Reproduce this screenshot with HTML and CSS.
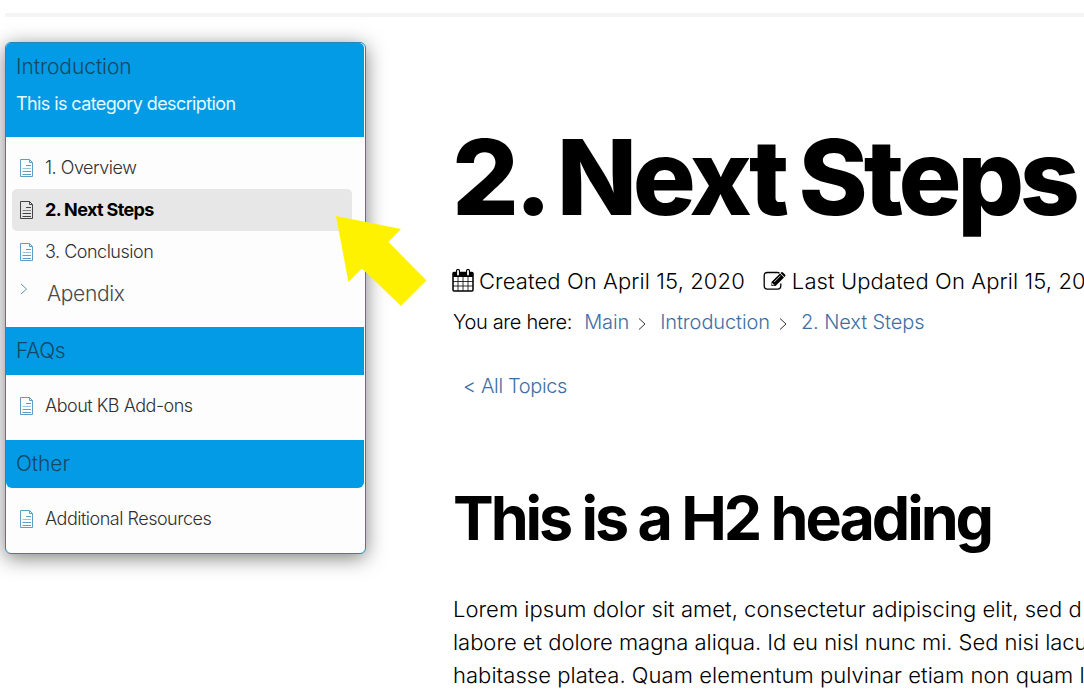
FILE: index.html
```html
<!DOCTYPE html>
<html lang="en">
<head>
<meta charset="utf-8">
<title>2. Next Steps</title>
<link rel="stylesheet" href="styles.css">
</head>
<body>
<svg width="0" height="0" class="defs">
  <symbol id="doc" viewBox="0 0 15 19">
    <path d="M1.500 .500H10.500L13.500 3.500V17.500H1.500Z M10.500 .500V3.500H13.500" fill="none" stroke="currentColor"/>
    <path d="M7 6.500H12M3.500 12.500H12M3.500 15.500H12" stroke="currentColor"/>
    <path d="M3.500 9.500H12" stroke="currentColor" opacity=".6"/>
  </symbol>
</svg>
<div class="rule"></div>
<div class="layout">
  <nav class="sidebar">
    <section>
      <header class="cat cat-first"><h4>Introduction</h4><p>This is category description</p></header>
      <ul class="intro">
        <li><svg class="doc"><use href="#doc"/></svg><span>1. Overview</span></li>
        <li class="active"><svg class="doc"><use href="#doc"/></svg><span>2. Next Steps</span></li>
        <li><svg class="doc"><use href="#doc"/></svg><span>3. Conclusion</span></li>
        <li class="sub"><svg class="chev" viewBox="0 0 8 12"><path d="M1 1L6.500 6L1 11" fill="none" stroke="currentColor"/></svg><span>Apendix</span></li>
      </ul>
    </section>
    <section>
      <header class="cat"><h4 class="faq">FAQs</h4></header>
      <ul><li><svg class="doc"><use href="#doc"/></svg><span>About KB Add-ons</span></li></ul>
    </section>
    <section>
      <header class="cat cat-last"><h4>Other</h4></header>
      <ul><li><svg class="doc"><use href="#doc"/></svg><span>Additional Resources</span></li></ul>
    </section>
    <svg class="arrow" viewBox="0 0 92 92"><path d="M0 0L65 13L52.500 26L90.500 64.500L65 90L26 52.500L12.500 66Z" fill="#fff200"/></svg>
  </nav>
  <main>
    <h1>2. Next Steps</h1>
    <div class="meta">
      <svg class="cal" viewBox="0 0 22 23">
        <path d="M1 4.500Q1 3.500 2 3.500H20Q21 3.500 21 4.500V21Q21 22 20 22H2Q1 22 1 21Z" fill="#fff" stroke="#000" stroke-width="1.500"/>
        <path d="M1 3.500H21V8H1Z"/>
        <path d="M6 8V22M11 8V22M16 8V22M1 12.500H21M1 17H21" stroke="#000" stroke-width=".8"/>
        <path d="M6 1.800V5.500M16 1.800V5.500" stroke="#000" stroke-width="4" stroke-linecap="round"/>
        <path d="M6 2V5.500M16 2V5.500" stroke="#fff" stroke-width="1.800" stroke-linecap="round"/>
      </svg><span>Created On April 15, 2020</span>
      <svg class="edit" viewBox="0 0 23 20">
        <path d="M16.500 2.200Q15.500 1.500 14.500 1.500H4.500Q1.200 1.500 1.200 4.800V14.800Q1.200 18.200 4.500 18.200H14.500Q17.800 18.200 17.800 14.800V12.500" fill="none" stroke="#000" stroke-width="1.300"/>
        <path d="M17 2.500L21 6.500L12.500 15H8.500V11Z"/>
        <path d="M18 1.500Q19 .500 20 1.500L22 3.500Q23 4.500 22 5.500L21.500 6L17.500 2Z"/>
        <path d="M11.200 11L17.500 4.700" stroke="#fff" stroke-width=".8"/><path d="M9.600 12.200V13.900H11.300" fill="none" stroke="#fff" stroke-width=".9"/>
      </svg><span>Last Updated On April 15, 2020</span>
    </div>
    <div class="crumbs"><span class="here">You are here:</span><a>Main</a><svg class="sep" viewBox="0 0 8 12"><path d="M1 0.500L7 6L1 11.500" fill="none" stroke="#333"/></svg><a>Introduction</a><svg class="sep" viewBox="0 0 8 12"><path d="M1 0.500L7 6L1 11.500" fill="none" stroke="#333"/></svg><a>2. Next Steps</a></div>
    <div class="back"><a>&lt; All Topics</a></div>
    <h2>This is a H2 heading</h2>
    <p class="body"><span class="l1">Lorem ipsum dolor sit amet, consectetur adipiscing elit, sed d</span><span>labore et dolore magna aliqua. Id eu nisl nunc mi. Sed nisi lacu</span><span class="l3">habitasse platea. Quam elementum pulvinar etiam non quam l</span></p>
  </main>
</div>
</body>
</html>
```
FILE: styles.css
```css
* { box-sizing: border-box; }
html, body { width: 1084px; height: 694px; overflow: hidden; }
body { margin: 0; background: #fff; font-family: Inter, sans-serif; font-weight: 360; color: #000; display: flex; flex-direction: column; white-space: nowrap; }
h1, h2, h4, p, ul { margin: 0; padding: 0; font-weight: inherit; }
.defs { position: absolute; }
.rule { flex: none; height: 4px; margin: 13px 0 25px 5px; background: #f4f4f4; }
.layout { display: flex; align-items: flex-start; }
.sidebar { position: relative; flex: none; width: 361px; height: 512px; margin-left: 5px; padding-right: 1px; border: 1px solid #2487b5; border-radius: 6px; background: #fdfdfd; box-shadow: 0 4px 20px rgba(0, 0, 0, .5); }
.cat { height: 48px; padding-left: 10px; background: #049be6; color: #154865; }
.cat h4 { font-size: 21px; line-height: 47px; letter-spacing: -.08px; }
.cat .faq { letter-spacing: -.4px; }
.cat-first { height: 94px; border-radius: 5px 5px 0 0; }
.cat-first p { font-size: 18px; font-weight: 430; line-height: 28px; color: #e4fbff; letter-spacing: -.6px; }
.cat-last { border-radius: 0 0 6px 6px; }
ul { list-style: none; height: 65px; padding: 10px 12px 0 6px !important; }
ul.intro { height: 190px; }
li { display: flex; align-items: center; height: 42px; padding-left: 8px; font-size: 18px; letter-spacing: -.49px; color: #303030; }
li span { margin-top: -1px; }
.doc { width: 15px; height: 19px; margin: 0 11px 0 -1px; color: #5c9ec5; }
.active { border-radius: 5px; background: #e7e7e7; font-weight: 700; letter-spacing: -.65px; color: #000; }
.active .doc { color: #444; }
.chev { width: 8px; height: 12px; margin: -10px 19px 0 0; color: #559bb5; }
.sub { font-size: 21px; letter-spacing: -.35px; color: #454a4d; }
.arrow { position: absolute; left: 330px; top: 173px; width: 92px; height: 92px; }
main { margin-left: 87px; width: 631px; }
h1 { font-size: 105px; font-weight: 820; line-height: 120px; letter-spacing: -4.300px; word-spacing: -4.800px; margin-top: 75px; margin-left: -1px; }
.meta { display: flex; align-items: center; height: 40px; margin-top: 24px; font-size: 22px; letter-spacing: .1px; }
.cal { width: 22px; height: 23px; margin: -1px 5px 0 -1px; flex: none; }
.edit { width: 23px; height: 20px; margin: -1px 6px 0 18px; flex: none; }
.crumbs { display: flex; align-items: center; height: 40px; margin-top: 1px; font-size: 20px; letter-spacing: -.1px; }
a { color: #3e6fa3; }
.here { margin-right: 12px; letter-spacing: -.34px; }
.sep { width: 8px; height: 12px; margin: 3px 14px 0 9px; }
.back { margin: 24px 0 0 10px; font-size: 20px; line-height: 40px; letter-spacing: -.36px; }
h2 { font-size: 61px; font-weight: 700; line-height: 70px; letter-spacing: -3.050px; margin-top: 77px; }
.body { margin-top: 40px; font-size: 22px; line-height: 33px; letter-spacing: -.03px; }
.body span { display: block; }
.body .l1, .body .l3 { letter-spacing: .04px; }
```
